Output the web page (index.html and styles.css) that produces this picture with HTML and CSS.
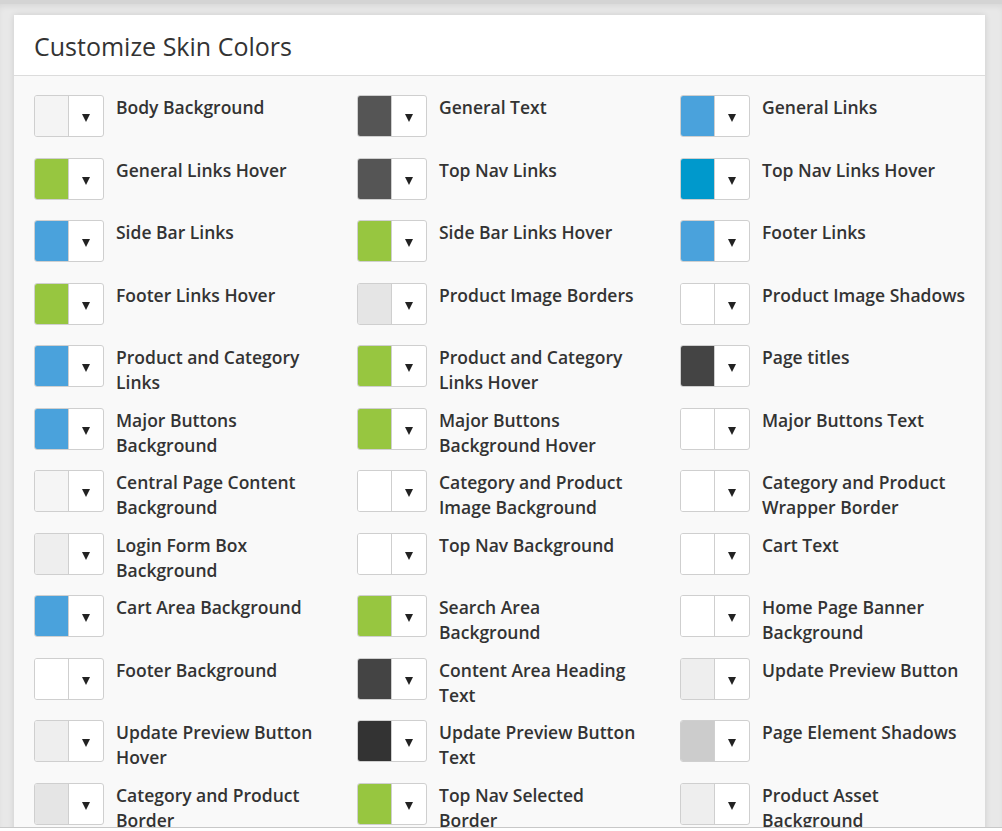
FILE: index.html
```html
<!DOCTYPE html>
<html>

<head>
    <meta charset="UTF-8">
    <meta name="viewport" content="width=device-width, initial-scale=1.0">
    <title>Customize Skin Colors</title>
    <link rel="stylesheet" href="styles.css">
</head>

<body>
    <div class="panel">
        <div class="panel-header">
            <h2>Customize Skin Colors</h2>
        </div>

        <div class="panel-body">
            <div class="colors">
                <!-- row 1 -->
                <div class="item"><div class="swatch"><span class="chip" style="background:#f4f4f4"></span><span class="arrow"></span></div><span class="name">Body Background</span></div>
                <div class="item"><div class="swatch"><span class="chip" style="background:#555555"></span><span class="arrow"></span></div><span class="name">General Text</span></div>
                <div class="item"><div class="swatch"><span class="chip" style="background:#4aa2dc"></span><span class="arrow"></span></div><span class="name">General Links</span></div>

                <!-- row 2 -->
                <div class="item"><div class="swatch"><span class="chip" style="background:#97c640"></span><span class="arrow"></span></div><span class="name">General Links Hover</span></div>
                <div class="item"><div class="swatch"><span class="chip" style="background:#555555"></span><span class="arrow"></span></div><span class="name">Top Nav Links</span></div>
                <div class="item"><div class="swatch"><span class="chip" style="background:#0099cc"></span><span class="arrow"></span></div><span class="name">Top Nav Links Hover</span></div>

                <!-- row 3 -->
                <div class="item"><div class="swatch"><span class="chip" style="background:#4aa2dc"></span><span class="arrow"></span></div><span class="name">Side Bar Links</span></div>
                <div class="item"><div class="swatch"><span class="chip" style="background:#97c640"></span><span class="arrow"></span></div><span class="name">Side Bar Links Hover</span></div>
                <div class="item"><div class="swatch"><span class="chip" style="background:#4aa2dc"></span><span class="arrow"></span></div><span class="name">Footer Links</span></div>

                <!-- row 4 -->
                <div class="item"><div class="swatch"><span class="chip" style="background:#97c640"></span><span class="arrow"></span></div><span class="name">Footer Links Hover</span></div>
                <div class="item"><div class="swatch"><span class="chip" style="background:#e5e5e5"></span><span class="arrow"></span></div><span class="name">Product Image Borders</span></div>
                <div class="item"><div class="swatch"><span class="chip" style="background:#ffffff"></span><span class="arrow"></span></div><span class="name">Product Image Shadows</span></div>

                <!-- row 5 -->
                <div class="item"><div class="swatch"><span class="chip" style="background:#4aa2dc"></span><span class="arrow"></span></div><span class="name">Product and Category Links</span></div>
                <div class="item"><div class="swatch"><span class="chip" style="background:#97c640"></span><span class="arrow"></span></div><span class="name">Product and Category Links Hover</span></div>
                <div class="item"><div class="swatch"><span class="chip" style="background:#444444"></span><span class="arrow"></span></div><span class="name">Page titles</span></div>

                <!-- row 6 -->
                <div class="item"><div class="swatch"><span class="chip" style="background:#4aa2dc"></span><span class="arrow"></span></div><span class="name">Major Buttons Background</span></div>
                <div class="item"><div class="swatch"><span class="chip" style="background:#97c640"></span><span class="arrow"></span></div><span class="name">Major Buttons Background Hover</span></div>
                <div class="item"><div class="swatch"><span class="chip" style="background:#ffffff"></span><span class="arrow"></span></div><span class="name">Major Buttons Text</span></div>

                <!-- row 7 -->
                <div class="item"><div class="swatch"><span class="chip" style="background:#f5f5f5"></span><span class="arrow"></span></div><span class="name">Central Page Content Background</span></div>
                <div class="item"><div class="swatch"><span class="chip" style="background:#ffffff"></span><span class="arrow"></span></div><span class="name">Category and Product Image Background</span></div>
                <div class="item"><div class="swatch"><span class="chip" style="background:#ffffff"></span><span class="arrow"></span></div><span class="name">Category and Product Wrapper Border</span></div>

                <!-- row 8 -->
                <div class="item"><div class="swatch"><span class="chip" style="background:#eeeeee"></span><span class="arrow"></span></div><span class="name">Login Form Box Background</span></div>
                <div class="item"><div class="swatch"><span class="chip" style="background:#ffffff"></span><span class="arrow"></span></div><span class="name">Top Nav Background</span></div>
                <div class="item"><div class="swatch"><span class="chip" style="background:#ffffff"></span><span class="arrow"></span></div><span class="name">Cart Text</span></div>

                <!-- row 9 -->
                <div class="item"><div class="swatch"><span class="chip" style="background:#4aa2dc"></span><span class="arrow"></span></div><span class="name">Cart Area Background</span></div>
                <div class="item"><div class="swatch"><span class="chip" style="background:#97c640"></span><span class="arrow"></span></div><span class="name">Search Area Background</span></div>
                <div class="item"><div class="swatch"><span class="chip" style="background:#ffffff"></span><span class="arrow"></span></div><span class="name">Home Page Banner Background</span></div>

                <!-- row 10 -->
                <div class="item"><div class="swatch"><span class="chip" style="background:#ffffff"></span><span class="arrow"></span></div><span class="name">Footer Background</span></div>
                <div class="item"><div class="swatch"><span class="chip" style="background:#444444"></span><span class="arrow"></span></div><span class="name">Content Area Heading Text</span></div>
                <div class="item"><div class="swatch"><span class="chip" style="background:#eeeeee"></span><span class="arrow"></span></div><span class="name">Update Preview Button</span></div>

                <!-- row 11 -->
                <div class="item"><div class="swatch"><span class="chip" style="background:#eeeeee"></span><span class="arrow"></span></div><span class="name">Update Preview Button Hover</span></div>
                <div class="item"><div class="swatch"><span class="chip" style="background:#333333"></span><span class="arrow"></span></div><span class="name">Update Preview Button Text</span></div>
                <div class="item"><div class="swatch"><span class="chip" style="background:#cccccc"></span><span class="arrow"></span></div><span class="name">Page Element Shadows</span></div>

                <!-- row 12 -->
                <div class="item"><div class="swatch"><span class="chip" style="background:#e5e5e5"></span><span class="arrow"></span></div><span class="name">Category and Product Border</span></div>
                <div class="item"><div class="swatch"><span class="chip" style="background:#97c640"></span><span class="arrow"></span></div><span class="name">Top Nav Selected Border</span></div>
                <div class="item"><div class="swatch"><span class="chip" style="background:#eeeeee"></span><span class="arrow"></span></div><span class="name">Product Asset Background</span></div>
            </div>
        </div>
    </div>

    <div class="bottom-edge"></div>
</body>

</html>
```

FILE: styles.css
```css
* {
    margin: 0;
    padding: 0;
    box-sizing: border-box;
}

body {
    font-family: 'Open Sans', 'Liberation Sans', sans-serif;
    background-color: #e8e8e8;
    color: #333;
    height: 100vh;
    overflow: hidden;
    padding: 15px 17px 0 14px;
    box-shadow: inset 0 4px 0 #d4d4d4, inset 0 8px 6px -2px rgba(0, 0, 0, 0.08);
}

.panel {
    background-color: #f9f9f9;
    box-shadow: 0 0 6px rgba(0, 0, 0, 0.12);
    height: 900px;
}

.panel-header {
    height: 61px;
    background-color: #fff;
    border-bottom: 1px solid #dcdcdc;
    padding: 0 20px;
}

.panel-header h2 {
    font-size: 25px;
    font-weight: 400;
    line-height: 62px;
    color: #333;
}

.panel-body {
    padding: 19px 20px;
}

.colors {
    display: grid;
    grid-template-columns: repeat(3, 323px);
    grid-auto-rows: 62.5px;
}

.item {
    display: flex;
    align-items: flex-start;
    gap: 12px;
}

.swatch {
    display: flex;
    flex-shrink: 0;
    width: 70px;
    height: 42px;
    border: 1px solid #cfcfcf;
    border-radius: 3px;
    background-color: #fff;
    overflow: hidden;
}

.chip {
    width: 34px;
    height: 100%;
    border-right: 1px solid #cfcfcf;
}

.arrow {
    flex: 1;
    display: flex;
    justify-content: center;
    align-items: center;
}

.arrow::after {
    content: "";
    margin-top: 4px;
    border-left: 4.5px solid transparent;
    border-right: 4.5px solid transparent;
    border-top: 8px solid #222;
}

.name {
    font-size: 17.5px;
    font-weight: 600;
    line-height: 25px;
    color: #333;
    max-width: 205px;
}

.bottom-edge {
    position: fixed;
    left: 0;
    right: 0;
    bottom: 0;
    height: 4px;
    background-color: #fff;
    border-top: 1px solid #c8c8c8;
}
```
